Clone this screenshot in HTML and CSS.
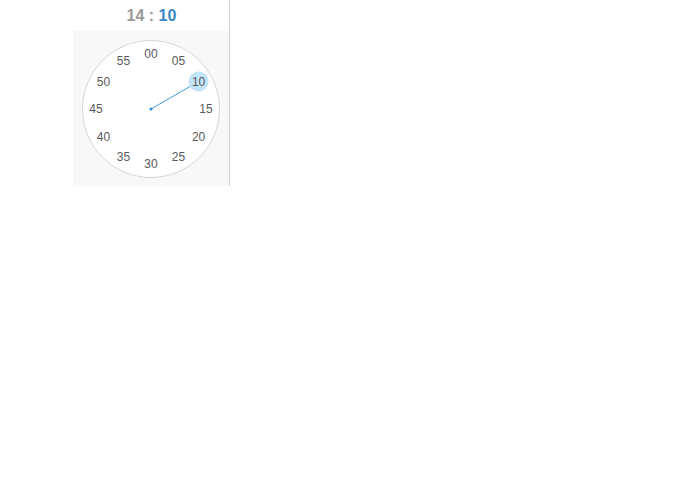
FILE: index.html
```html
<!DOCTYPE html>
<html>
<head>
<meta charset="utf-8">
<link rel="stylesheet" href="styles.css">
</head>
<body>
<div class="popover">
  <div class="header"><span class="hours">14</span><span class="sep"> : </span><span class="minutes">10</span></div>
  <div class="content">
    <svg class="dial" width="140" height="140" viewBox="0 0 140 140">
      <circle cx="70" cy="70" r="68.5" fill="#fff" stroke="#d6d6d6" stroke-width="1"/>
      <line x1="70" y1="70" x2="117.6" y2="42.5" stroke="#3b9ddb" stroke-width="1"/>
      <circle cx="117.6" cy="42.5" r="10" fill="#c1e4f7"/>
      <circle cx="70" cy="70" r="1.6" fill="#2a8fd0"/>
      <g class="ticks">
        <text x="70" y="15">00</text>
        <text x="97.5" y="22.4">05</text>
        <text x="117.6" y="42.5">10</text>
        <text x="125" y="70">15</text>
        <text x="117.6" y="97.5">20</text>
        <text x="97.5" y="117.6">25</text>
        <text x="70" y="125">30</text>
        <text x="42.5" y="117.6">35</text>
        <text x="22.4" y="97.5">40</text>
        <text x="15" y="70">45</text>
        <text x="22.4" y="42.5">50</text>
        <text x="42.5" y="22.4">55</text>
      </g>
    </svg>
  </div>
</div>
</body>
</html>
```
FILE: styles.css
```css
html, body {
  margin: 0;
  padding: 0;
  background: #fff;
}
body {
  font-family: "Liberation Sans", Arial, sans-serif;
}
.popover {
  margin-left: 73px;
  width: 156px;
  border-right: 1px solid #cfcfcf;
}
.header {
  height: 31px;
  line-height: 31px;
  text-align: center;
  font-size: 16px;
  font-weight: bold;
  color: #999;
  background: #fff;
  padding-left: 1px;
}
.minutes {
  color: #3a86c4;
}
.content {
  background: #f8f8f8;
  height: 155px;
  padding-top: 8px;
  padding-right: 1px;
  box-sizing: border-box;
  display: flex;
  justify-content: center;
}
.dial {
  display: block;
}
.ticks text {
  font-family: "Liberation Sans", Arial, sans-serif;
  font-size: 12px;
  fill: #5a5a5a;
  text-anchor: middle;
  dominant-baseline: central;
}
```
